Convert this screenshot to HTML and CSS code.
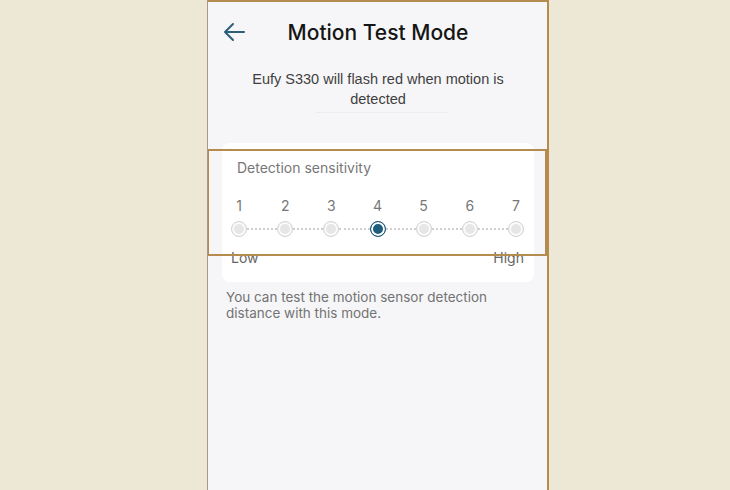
FILE: index.html
```html
<!DOCTYPE html>
<html>
	<head>
		<meta charset="utf-8" />
		<title>Motion Test Mode</title>
		<link rel="stylesheet" href="styles.css">
	</head>
	<body>
		<div class="phone">
			<div class="header">
				<a class="back">
					<svg width="24" height="20" viewBox="0 0 24 20">
						<path d="M22 10H3M11 2L3 10L11 18" fill="none" stroke="#2b5f78" stroke-width="2" stroke-linecap="round" stroke-linejoin="round"/>
					</svg>
				</a>
				<h1>Motion Test Mode</h1>
			</div>
			<p class="desc">Eufy S330 will flash red when motion is detected</p>
			<div class="ghost"></div>
			<div class="card">
				<p class="label">Detection sensitivity</p>
				<div class="nums">
					<span>1</span><span>2</span><span>3</span><span>4</span><span>5</span><span>6</span><span>7</span>
				</div>
				<div class="track">
					<i class="dot"></i><b></b>
					<i class="dot"></i><b></b>
					<i class="dot"></i><b></b>
					<i class="dot current"></i><b></b>
					<i class="dot"></i><b></b>
					<i class="dot"></i><b></b>
					<i class="dot"></i>
				</div>
				<div class="ends">
					<span>Low</span><span>High</span>
				</div>
			</div>
			<p class="tip">You can test the motion sensor detection distance with this mode.</p>
			<div class="mark"></div>
		</div>
	</body>
</html>
```

FILE: styles.css
```css
*{
	margin: 0;
	padding: 0;
	box-sizing: border-box;
}
body{
	background-color: #ede7d6;
	font-family: Inter, "Liberation Sans", sans-serif;
	overflow: hidden;
}
/*手机框*/
.phone{
	position: relative;
	margin-left: 207px;
	width: 342px;
	height: 500px;
	background-color: #f6f6f8;
	border-top: 2px solid #b58b4f;
	border-left: 1px solid #a89a86;
	border-right: 2px solid #b58b4f;
	padding: 0 13px 0 14px;
}
.header{
	display: flex;
	align-items: center;
	height: 60px;
}
.back{
	display: block;
	width: 24px;
	height: 20px;
	margin-top: -1px;
}
.header h1{
	flex: 1;
	text-align: center;
	font-size: 21px;
	font-weight: 500;
	color: #151515;
	margin-right: 24px;
}
.desc{
	margin: 7px 20px 0;
	text-align: center;
	font-family: "Liberation Sans", Arial, sans-serif;
	font-size: 14.5px;
	line-height: 20px;
	color: #3f3f3f;
}
.ghost{
	width: 132px;
	margin: 3px 0 0 94px;
	border-top: 1px dotted #e6e6e8;
}
/*卡片*/
.card{
	margin-top: 30px;
	background-color: #fff;
	border-radius: 8px;
	padding: 15px 10px 14px 9px;
}
.card .label{
	padding-left: 6px;
	font-size: 14px;
	line-height: 20px;
	color: #777;
}
.nums{
	display: flex;
	justify-content: space-between;
	margin-top: 18px;
	font-size: 14px;
	line-height: 20px;
	color: #777;
}
.nums span{
	width: 16px;
	text-align: center;
}
.track{
	display: flex;
	align-items: center;
	margin-top: 5px;
	height: 16px;
}
.track b{
	flex: 1;
	height: 0;
	border-top: 2px dotted #cfcfcf;
}
.dot{
	width: 16px;
	height: 16px;
	border-radius: 50%;
	border: 1.5px solid #d3d3d3;
	background-color: #e6e6e6;
	box-shadow: inset 0 0 0 2px #fbfbfb;
}
.dot.current{
	border-color: #1d5673;
	background-color: #1d5e7e;
	box-shadow: inset 0 0 0 2px #fff;
}
.ends{
	display: flex;
	justify-content: space-between;
	margin-top: 11px;
	font-size: 14px;
	line-height: 20px;
	color: #666;
}
.tip{
	max-width: 275px;
	margin: 7px 4px 0;
	font-size: 13.5px;
	line-height: 16px;
	color: #737373;
}
/*高亮框*/
.mark{
	position: absolute;
	left: 0;
	right: 0;
	top: 147px;
	height: 107px;
	border: 2px solid #b58b4f;
	border-left-width: 1px;
}
```
